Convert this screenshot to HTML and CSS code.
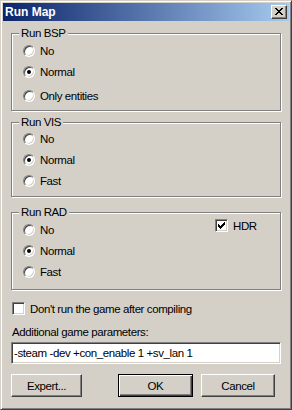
FILE: index.html
```html
<!DOCTYPE html>
<html lang="en">
<head>
    <meta charset="UTF-8">
    <title>Run Map</title>
    <link rel="stylesheet" href="styles.css">
</head>
<body>
    <div class="window">
        <div class="titlebar">
            <span class="title">Run Map</span>
            <span class="close">
                <svg width="8" height="7" viewBox="0 0 8 7" shape-rendering="crispEdges">
                    <path d="M0 0h2v1h-2zM6 0h2v1h-2zM1 1h2v1h-2zM5 1h2v1h-2zM2 2h4v1h-4zM3 3h2v1h-2zM2 4h4v1h-4zM1 5h2v1h-2zM5 5h2v1h-2zM0 6h2v1h-2zM6 6h2v1h-2z" fill="#000"/>
                </svg>
            </span>
        </div>
        <div class="content">
            <fieldset class="group group-bsp">
                <legend>Run BSP</legend>
                <label class="option"><span class="radio"></span>No</label>
                <label class="option"><span class="radio checked"></span>Normal</label>
                <label class="option option-gap"><span class="radio"></span>Only entities</label>
            </fieldset>

            <fieldset class="group group-vis">
                <legend>Run VIS</legend>
                <label class="option"><span class="radio"></span>No</label>
                <label class="option"><span class="radio checked"></span>Normal</label>
                <label class="option"><span class="radio"></span>Fast</label>
            </fieldset>

            <fieldset class="group group-rad">
                <legend>Run RAD</legend>
                <div class="rad-row">
                    <div class="options">
                        <label class="option"><span class="radio"></span>No</label>
                        <label class="option"><span class="radio checked"></span>Normal</label>
                        <label class="option"><span class="radio"></span>Fast</label>
                    </div>
                    <label class="check hdr">
                        <span class="checkbox">
                            <svg width="7" height="7" viewBox="0 0 7 7" shape-rendering="crispEdges">
                                <path d="M6 0h1v3h-1zM5 1h1v3h-1zM4 2h1v3h-1zM3 3h1v3h-1zM2 4h1v3h-1zM1 3h1v3h-1zM0 2h1v3h-1z" fill="#000"/>
                            </svg>
                        </span>HDR
                    </label>
                </div>
            </fieldset>

            <label class="check dont-run"><span class="checkbox"></span>Don't run the game after compiling</label>

            <div class="field-label">Additional game parameters:</div>
            <div class="textbox">-steam -dev +con_enable 1 +sv_lan 1</div>

            <div class="buttons">
                <button class="btn btn-expert">Expert...</button>
                <button class="btn btn-default">OK</button>
                <button class="btn">Cancel</button>
            </div>
        </div>
    </div>
</body>
</html>
```

FILE: styles.css
```css
body {
    margin: 0;
    background: #d4d0c8;
    font-family: "Liberation Sans", Arial, sans-serif;
    font-size: 11.5px;
    letter-spacing: -0.4px;
    color: #000;
}
.window {
    width: 292px;
    height: 410px;
    box-sizing: border-box;
    background: #d4d0c8;
    border: 1px solid;
    border-color: #d4d0c8 #404040 #404040 #d4d0c8;
    box-shadow: inset 1px 1px 0 #fff, inset -1px -1px 0 #808080;
    padding: 2px;
}
.titlebar {
    height: 18px;
    display: flex;
    align-items: center;
    justify-content: space-between;
    background: linear-gradient(to right, #0a246a, #a6caf0);
    padding: 0 2px 0 2px;
}
.title {
    color: #fff;
    font-weight: bold;
    font-size: 12px;
    letter-spacing: 0;
}
.close {
    width: 16px;
    height: 14px;
    box-sizing: border-box;
    background: #d4d0c8;
    border: 1px solid;
    border-color: #fff #404040 #404040 #fff;
    box-shadow: inset -1px -1px 0 #808080;
    display: flex;
    align-items: center;
    justify-content: center;
    padding: 0 1px 1px 0;
}
.close svg {
    display: block;
}
.content {
    padding: 6px 8px 0 8px;
}
.group {
    margin: 0;
    padding: 0 0 4px 0;
    border: 1px solid #808080;
    box-shadow: 1px 1px 0 #fff, inset 1px 1px 0 #fff;
    min-width: 0;
}
.group legend {
    margin-left: 7px;
    padding: 0 2px;
    line-height: 13px;
    background: #d4d0c8;
}
.group-vis {
    margin-top: 5px;
    padding-bottom: 5px;
}
.group-vis .option:first-of-type {
    margin-top: -1px;
}
.group-rad {
    margin-top: 9px;
    padding-bottom: 7px;
}
.option {
    display: flex;
    align-items: center;
    height: 21px;
    padding-left: 11px;
}
.option-gap {
    margin-top: 3px;
}
.radio {
    width: 12px;
    height: 12px;
    box-sizing: border-box;
    border-radius: 50%;
    border: 1px solid;
    border-color: #808080 #fff #fff #808080;
    box-shadow: inset 1px 1px 0 #404040, inset -1px -1px 0 #d4d0c8;
    background: #fff;
    margin-right: 5px;
    display: flex;
    align-items: center;
    justify-content: center;
}
.radio.checked::after {
    content: "";
    width: 4px;
    height: 4px;
    border-radius: 50%;
    background: #000;
}
.rad-row {
    display: flex;
}
.options {
    width: 203px;
}
.check {
    display: flex;
    align-items: center;
}
.checkbox {
    width: 13px;
    height: 13px;
    box-sizing: border-box;
    border: 1px solid;
    border-color: #808080 #fff #fff #808080;
    box-shadow: inset 1px 1px 0 #404040, inset -1px -1px 0 #d4d0c8;
    background: #fff;
    display: flex;
    align-items: center;
    justify-content: center;
    margin-right: 5px;
}
.hdr {
    align-self: flex-start;
    height: 13px;
}
.dont-run {
    height: 21px;
    margin-top: 8px;
    padding-left: 1px;
}
.field-label {
    line-height: 13px;
    margin-top: 7px;
    padding-left: 1px;
}
.textbox {
    margin-top: 3px;
    height: 22px;
    box-sizing: border-box;
    background: #fff;
    border: 1px solid;
    border-color: #808080 #fff #fff #808080;
    box-shadow: inset 1px 1px 0 #404040, inset -1px -1px 0 #d4d0c8;
    padding: 0 2px;
    line-height: 20px;
}
.buttons {
    display: flex;
    margin-top: 10px;
    gap: 8px;
}
.btn {
    height: 23px;
    width: 74px;
    padding: 0;
    font: inherit;
    letter-spacing: inherit;
    color: #000;
    background: #d4d0c8;
    border: 1px solid;
    border-color: #fff #404040 #404040 #fff;
    box-shadow: inset -1px -1px 0 #808080;
    border-radius: 0;
}
.btn-expert {
    width: 71px;
    margin-right: 28px;
}
.btn-default {
    width: 75px;
    border-color: #000;
    box-shadow: inset 1px 1px 0 #fff, inset -1px -1px 0 #404040, inset -2px -2px 0 #808080;
}
```
